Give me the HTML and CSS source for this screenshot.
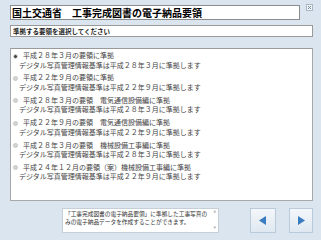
FILE: index.html
```html
<!DOCTYPE html>
<html lang="ja">
<head>
    <meta charset="UTF-8">
    <meta name="viewport" content="width=device-width, initial-scale=1.0">
    <title>電子納品要領の選択</title>
    <link rel="stylesheet" href="styles.css">
</head>
<body>

<div class="window">
    <div class="header">
        <div class="title">国土交通省　工事完成図書の電子納品要領</div>
        <div class="close">
            <svg width="7" height="7" viewBox="0 0 7 7"><path d="M2 2 L5 5 M5 2 L2 5" stroke="#7d8a96" stroke-width="1"/></svg>
        </div>
    </div>

    <div class="prompt">準拠する要領を選択してください</div>

    <div class="list">
        <div class="item">
            <span class="radio checked"></span>
            <span class="name">平成２８年３月の要領に準拠</span>
            <span class="desc">デジタル写真管理情報基準は平成２８年３月に準拠します</span>
        </div>
        <div class="item">
            <span class="radio"></span>
            <span class="name">平成２２年９月の要領に準拠</span>
            <span class="desc">デジタル写真管理情報基準は平成２２年９月に準拠します</span>
        </div>
        <div class="item">
            <span class="radio"></span>
            <span class="name">平成２８年３月の要領　電気通信設備編に準拠</span>
            <span class="desc">デジタル写真管理情報基準は平成２８年３月に準拠します</span>
        </div>
        <div class="item">
            <span class="radio"></span>
            <span class="name">平成２２年９月の要領　電気通信設備編に準拠</span>
            <span class="desc">デジタル写真管理情報基準は平成２２年９月に準拠します</span>
        </div>
        <div class="item">
            <span class="radio"></span>
            <span class="name">平成２８年３月の要領　機械設備工事編に準拠</span>
            <span class="desc">デジタル写真管理情報基準は平成２８年３月に準拠します</span>
        </div>
        <div class="item">
            <span class="radio"></span>
            <span class="name">平成２４年１２月の要領（案）機械設備工事編に準拠</span>
            <span class="desc">デジタル写真管理情報基準は平成２２年９月に準拠します</span>
        </div>
    </div>

    <div class="footer">
        <div class="note">
            <div class="note-text">「工事完成図書の電子納品要領」に準拠した工事写真の<br>みの電子納品データを作成することができます。</div>
            <div class="scroll"><span>&#9650;</span><span>&#9660;</span></div>
        </div>
        <div class="nav prev">
            <svg width="8" height="9" viewBox="0 0 8 9"><path d="M7 0 L7 9 L0 4.5 Z" fill="#3a7cc0"/></svg>
        </div>
        <div class="nav next">
            <svg width="8" height="9" viewBox="0 0 8 9"><path d="M1 0 L1 9 L8 4.5 Z" fill="#3a7cc0"/></svg>
        </div>
    </div>
</div>

</body>
</html>
```

FILE: styles.css
```css
body {
    margin: 0;
    background: #dae5ef;
    font-family: "Noto Sans CJK JP", "Noto Sans", sans-serif;
    color: #000;
}

.window {
    width: 321px;
    height: 240px;
    padding: 5px 8px 0 10px;
    box-sizing: border-box;
}

.header {
    display: flex;
    align-items: flex-start;
}

.title {
    width: 292px;
    height: 15px;
    box-sizing: border-box;
    background: #fff;
    border: 1px solid #8c8c8c;
    font-size: 10px;
    font-weight: bold;
    line-height: 13px;
    padding-left: 1px;
    white-space: nowrap;
}

.close {
    width: 7px;
    height: 7px;
    margin: -1px 0 0 6px;
    border: 1px solid #a9b8c6;
    background: #eef3f8;
    box-sizing: border-box;
    display: flex;
}

.close svg {
    margin: -1px;
}

.prompt {
    width: 303px;
    height: 12px;
    margin-top: 5px;
    box-sizing: border-box;
    background: #fff;
    border: 1px solid #9a9a9a;
    font-size: 6.5px;
    font-weight: bold;
    line-height: 10px;
    padding-left: 2px;
    color: #222;
}

.list {
    width: 303px;
    height: 153px;
    margin-top: 11px;
    box-sizing: border-box;
    background: #fff;
    border: 1px solid #a8a8a8;
    border-top-color: #9a9a9a;
    padding: 2px 0 0 1px;
}

.item {
    display: grid;
    grid-template-columns: 11px auto;
    margin-bottom: 3.4px;
    font-size: 7px;
    line-height: 9.5px;
    color: #444;
    white-space: nowrap;
}

.radio {
    width: 5px;
    height: 5px;
    margin: 2.5px 0 0 1px;
    box-sizing: border-box;
    border-radius: 50%;
    background: #d4d4d4;
    border: 1px solid #c8c8c8;
}

.radio.checked {
    background: #444;
    border: 1.5px solid #ddd;
}

.desc {
    grid-column: 1 / 3;
    padding-left: 7px;
}

.footer {
    display: flex;
    margin-top: 7px;
}

.note {
    width: 161px;
    height: 25px;
    margin-left: 52px;
    box-sizing: border-box;
    background: #fff;
    border: 1px solid #c4cfd9;
    display: flex;
}

.note-text {
    flex: 1;
    font-size: 5.7px;
    line-height: 7.5px;
    padding: 1px 0 0 2px;
    color: #333;
    white-space: nowrap;
}

.scroll {
    width: 7px;
    display: flex;
    flex-direction: column;
    justify-content: space-between;
    align-items: center;
    font-size: 3px;
    line-height: 5px;
    color: #b5b5b5;
    padding: 1px 0;
}

.nav {
    width: 26px;
    height: 25px;
    box-sizing: border-box;
    border: 1px solid #b9cadb;
    background: linear-gradient(#f4f7fa, #dfe8f1);
    display: flex;
    align-items: center;
    justify-content: center;
}

.prev {
    margin-left: 31px;
}

.next {
    width: 25px;
    margin-left: 13px;
}
```
